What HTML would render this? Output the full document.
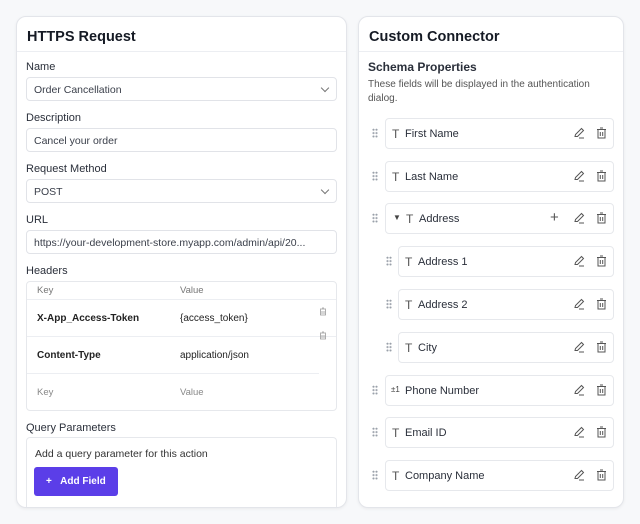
<!DOCTYPE html>
<html><head><style>
*{box-sizing:border-box;margin:0;padding:0}
body{width:640px;height:524px;background:#f7f8fa;font-family:"Liberation Sans",sans-serif;color:#1f2430;position:relative;overflow:hidden}
.card{position:absolute;background:#fff;border:1px solid #e3e5ea;border-radius:10px;box-shadow:0 1px 3px rgba(0,0,0,.06)}
.h{position:absolute;font-weight:bold;font-size:14.5px;color:#151a24}
.hr{position:absolute;left:0;right:0;height:1px;background:#eceef2}
.a{position:absolute}
.lbl{position:absolute;left:26px;font-size:11px;color:#2a2f3a}
.inp{position:absolute;left:26px;width:311px;height:24px;border:1px solid #e1e3e8;border-radius:4px;font-size:10.5px;color:#3a3f4a;padding:6px 0 0 7px;white-space:nowrap;overflow:hidden}
.chev{position:absolute;right:8px;top:7px;width:6px;height:6px;border-right:1px solid #777;border-bottom:1px solid #777;transform:rotate(45deg)}
.row{position:absolute;height:31px;border:1px solid #e6e8ec;border-radius:4px;right:10px;font-size:11px;color:#2a2f3a}
.row .t{position:absolute;top:8px;font-size:12px;color:#555}
.row .n{position:absolute;top:9px}
.grip{position:absolute;width:6px;height:10px;background-image:radial-gradient(circle,#9aa0aa 0.9px,transparent 1.1px);background-size:3px 3.4px}
svg{position:absolute}
</style></head><body>
<div class="card" style="left:16px;top:16px;width:331px;height:492px">
<div class="h" style="left:10px;top:12px">HTTPS Request</div>
<div class="hr" style="top:34px"></div>
</div>
<div class="lbl" style="top:61px">Name</div>
<div class="inp" style="top:77px">Order Cancellation<div class="chev"></div></div>
<div class="lbl" style="top:112px">Description</div>
<div class="inp" style="top:128px">Cancel your order</div>
<div class="lbl" style="top:163px">Request Method</div>
<div class="inp" style="top:179px">POST<div class="chev"></div></div>
<div class="lbl" style="top:214px">URL</div>
<div class="inp" style="top:230px">https://your-development-store.myapp.com/admin/api/20...</div>
<div class="lbl" style="top:265px">Headers</div>
<div class="a" style="left:26px;top:281px;width:311px;height:130px;border:1px solid #e6e8ec;border-radius:4px"></div>
<div class="a" style="left:27px;top:299px;width:309px;height:1px;background:#eceef2"></div>
<div class="a" style="left:27px;top:336px;width:309px;height:1px;background:#eceef2"></div>
<div class="a" style="left:27px;top:373px;width:292px;height:1px;background:#eceef2"></div>
<div class="a" style="left:37px;top:285px;font-size:9.5px;color:#777">Key</div>
<div class="a" style="left:180px;top:285px;font-size:9.5px;color:#777">Value</div>
<div class="a" style="left:37px;top:313px;font-size:10px;font-weight:bold;color:#222">X-App_Access-Token</div>
<div class="a" style="left:180px;top:313px;font-size:10px;color:#222">{access_token}</div>
<div class="a" style="left:37px;top:350px;font-size:10px;font-weight:bold;color:#222">Content-Type</div>
<div class="a" style="left:180px;top:350px;font-size:10px;color:#222">application/json</div>
<div class="a" style="left:37px;top:387px;font-size:9.5px;color:#888">Key</div>
<div class="a" style="left:180px;top:387px;font-size:9.5px;color:#888">Value</div>
<svg style="left:319px;top:307px" width="8" height="9" viewBox="0 0 8 9"><path d="M1 2h6M3 1h2M1.5 2.5v5.5h5V2.5M3 4v3M5 4v3" stroke="#999" fill="none" stroke-width=".8"/></svg>
<svg style="left:319px;top:331px" width="8" height="9" viewBox="0 0 8 9"><path d="M1 2h6M3 1h2M1.5 2.5v5.5h5V2.5M3 4v3M5 4v3" stroke="#999" fill="none" stroke-width=".8"/></svg>
<div class="lbl" style="top:422px">Query Parameters</div>
<div class="a" style="left:26px;top:437px;width:311px;height:70px;border:1px solid #e6e8ec;border-bottom:none;border-radius:4px 4px 0 0"></div>
<div class="a" style="left:35px;top:448px;font-size:10.5px;color:#333">Add a query parameter for this action</div>
<div class="a" style="left:34px;top:467px;width:84px;height:29px;background:#5b3ee8;border-radius:3px;color:#fff;font-size:10px;font-weight:bold;padding:9px 0 0 12px">+&nbsp;&nbsp;&nbsp;Add Field</div>

<div class="card" style="left:358px;top:16px;width:266px;height:492px">
<div class="h" style="left:10px;top:12px">Custom Connector</div>
<div class="hr" style="top:34px"></div>
</div>
<div class="a" style="left:368px;top:60px;font-size:12px;font-weight:bold;color:#2a2f3a">Schema Properties</div>
<div class="a" style="left:368px;top:78px;width:250px;font-size:10px;line-height:14px;color:#555">These fields will be displayed in the authentication dialog.</div>

<div id="rows"></div>
<script>
var rows=[["First Name",118,0,0],["Last Name",161,0,0],["Address",203,0,1],["Address 1",246,1,0],["Address 2",289,1,0],["City",332,1,0],["Phone Number",375,0,2],["Email ID",417,0,0],["Company Name",460,0,0]];
var h="";
rows.forEach(function(r){var x=r[2]?398:385,gx=r[2]?386:372,y=r[1];
h+='<div class="grip" style="left:'+gx+'px;top:'+(y+10)+'px"></div>';
h+='<div class="row" style="left:'+x+'px;top:'+y+'px;width:'+(614-x)+'px">';
var tx=6;
if(r[3]==1){h+='<div class="a" style="left:7px;top:9px;font-size:8px;color:#444">▼</div>';tx=20;}
if(r[3]==2)h+='<div class="a" style="left:5px;top:9px;font-size:8px;color:#444">±1</div>';
else h+='<div class="t" style="left:'+tx+'px">T</div>';
h+='<div class="n" style="left:'+(tx+13)+'px">'+r[0]+'</div>';
if(r[3]==1)h+='<div class="a" style="left:164px;top:5px;font-size:15px;color:#555">+</div>';
h+='<svg style="right:28px;top:8px" width="12" height="12" viewBox="0 0 12 12"><path d="M2 9.5L2.5 7.5 8.5 1.5 10.5 3.5 4.5 9.5zM6 11h5" stroke="#555" fill="none" stroke-width="1"/></svg>';
h+='<svg style="right:6px;top:8px" width="11" height="12" viewBox="0 0 11 12"><path d="M1 2.5h9M4 1h3M2 2.5v8.5h7V2.5M4.3 5v4M6.7 5v4" stroke="#555" fill="none" stroke-width="1"/></svg>';
h+='</div>';});
document.getElementById("rows").innerHTML=h;
</script>
</body></html>
